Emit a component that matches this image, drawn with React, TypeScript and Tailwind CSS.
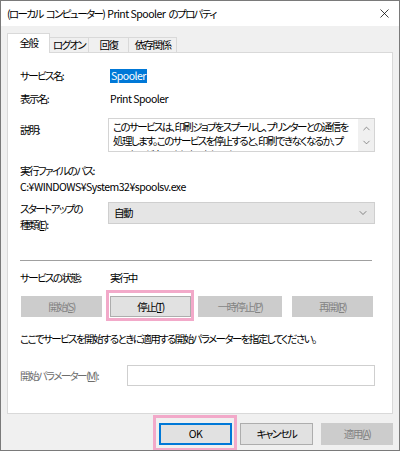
import { X, ChevronUp, ChevronDown } from 'lucide-react'

const font = "[font-family:'Noto_Sans_CJK_JP','Noto_Sans',sans-serif] [font-feature-settings:'palt']"

// latin runs get a looser tracking than the kana/kanji ones
const L = (props: { children: React.ReactNode }) => <span className="tracking-[-0.5px]">{props.children}</span>

const Btn = (props: { label: React.ReactNode; disabled?: boolean; className?: string; children?: React.ReactNode }) => {
    return (
        <div
            className={`relative h-[21px] flex items-center justify-center border ${
                props.disabled ? 'bg-[#cccccc] border-[#cccccc] text-[#838383]' : 'bg-[#e1e1e1] border-[#adadad] text-black'
            } ${props.className ?? ''}`}
        >
            {props.label}
            {props.children}
        </div>
    )
}

const Highlight = (props: { className: string }) => (
    <div className={`absolute border-[3px] border-[#f2a9c9] pointer-events-none ${props.className}`}></div>
)

const App = () => {
    return (
        <div className={`w-[400px] h-[451px] bg-[#f0f0f0] border border-[#7a7a7a] flex flex-col overflow-hidden text-black text-[10.5px] tracking-[-1.6px] leading-[16px] ${font}`}>
            {/* title bar */}
            <div className="h-[25px] bg-white flex items-center justify-between pl-[6px] pr-[7px] shrink-0">
                <span className="flex whitespace-nowrap">
                    <span>(ローカル</span>
                    <span className="ml-[3px]">コンピューター)</span>
                    <span className="ml-[3px]">
                        <L>Print Spooler</L>
                    </span>
                    <span className="ml-[3px]">のプロパティ</span>
                </span>
                <X size={15} strokeWidth={1.2} />
            </div>

            {/* tabs */}
            <div className="flex items-end h-[26px] ml-[6px] shrink-0 whitespace-nowrap">
                <div className="h-[20px] w-[43px] bg-white border border-b-0 border-[#d9d9d9] flex items-start justify-center pt-[1px] relative top-[1px] z-10">全般</div>
                <div className="h-[15px] w-[39px] border border-l-0 border-b-0 border-[#d9d9d9] flex items-center justify-center bg-[#f0f0f0]">ログオン</div>
                <div className="h-[15px] w-[40px] border border-l-0 border-b-0 border-[#d9d9d9] flex items-center justify-center bg-[#f0f0f0]">回復</div>
                <div className="h-[15px] w-[48px] border border-l-0 border-b-0 border-[#d9d9d9] flex items-center justify-center bg-[#f0f0f0]">依存関係</div>
            </div>

            {/* panel */}
            <div className="mx-[6px] h-[362px] bg-white border border-[#d9d9d9] shrink-0 pl-[12px] pr-[17px] flex flex-col whitespace-nowrap">
                <div className="flex mt-[15px] h-[16px] items-center">
                    <span className="w-[90px]">サービス名:</span>
                    <span className="bg-[#0078d7] text-white px-[1px] h-[14px] flex items-center">
                        <L>Spooler</L>
                    </span>
                </div>
                <div className="flex mt-[7px] h-[16px] items-center">
                    <span className="w-[90px]">表示名:</span>
                    <L>Print Spooler</L>
                </div>
                <div className="flex mt-[11px]">
                    <span className="w-[88px] pt-[4px]">説明:</span>
                    <div className="flex-1 h-[34px] border border-[#d4d4d4] flex overflow-hidden">
                        <div className="flex-1 pl-[4px] pt-[1px] leading-[14px] overflow-hidden">
                            このサービスは、印刷ジョブをスプールし、プリンターとの通信を
                            <br />
                            処理します。このサービスを停止すると、印刷できなくなるか、プ
                            <br />
                            リンターが表示されなくなります。
                        </div>
                        <div className="w-[16px] bg-[#f0f0f0] flex flex-col items-center justify-center gap-[3px] text-[#606060]">
                            <ChevronUp size={11} strokeWidth={1.5} />
                            <ChevronDown size={11} strokeWidth={1.5} />
                        </div>
                    </div>
                </div>
                <div className="mt-[11px] h-[16px] flex items-center">実行ファイルのパス:</div>
                <div className="h-[16px] flex items-center">
                    <L>C:¥WINDOWS¥System32¥spoolsv.exe</L>
                </div>
                <div className="flex mt-[6px]">
                    <div className="w-[88px] flex flex-col">
                        <span>スタートアップの</span>
                        <span>
                            種類(<span className="underline">E</span>):
                        </span>
                    </div>
                    <div className="flex-1 h-[22px] mt-[1px] bg-[#e5e5e5] border border-[#cfcfcf] flex items-center justify-between pl-[5px] pr-[5px]">
                        <span>自動</span>
                        <ChevronDown size={12} strokeWidth={1.2} className="text-[#404040]" />
                    </div>
                </div>
                <div className="mt-[27px] h-px bg-[#a0a0a0] mr-[3px]"></div>
                <div className="flex mt-[9px] h-[16px] items-center">
                    <span className="w-[90px]">サービスの状態:</span>
                    <span>実行中</span>
                </div>
                <div className="flex mt-[10px] ml-px">
                    <Btn label={<>開始(<span className="underline">S</span>)</>} disabled className="w-[81px]" />
                    <Btn label={<>停止(<span className="underline">T</span>)</>} className="w-[81px] ml-[8px]">
                        <Highlight className="-left-[5px] -right-[4px] -top-[7px] -bottom-[5px]" />
                    </Btn>
                    <Btn label={<>一時停止(<span className="underline">P</span>)</>} disabled className="w-[84px] ml-[7px]" />
                    <Btn label={<>再開(<span className="underline">R</span>)</>} disabled className="w-[81px] ml-[10px]" />
                </div>
                <div className="mt-[14px] h-[16px] flex items-center">
                    ここでサービスを開始するときに適用する開始パラメーターを指定してください。
                </div>
                <div className="flex mt-[18px] items-center">
                    <span className="w-[107px] text-[#6d6d6d]">
                        開始パラメーター(<span className="underline">M</span>):
                    </span>
                    <div className="flex-1 h-[21px] border border-[#cfcfcf]"></div>
                </div>
            </div>

            {/* footer buttons */}
            <div className="flex justify-end gap-[8px] pr-[6px] mt-[9px] whitespace-nowrap">
                <Btn label={<L>OK</L>} className="w-[73px] h-[22px] !border-[#0078d7] border-2">
                    <Highlight className="-left-[8px] -right-[7px] -top-[10px] -bottom-[8px]" />
                </Btn>
                <Btn label="キャンセル" className="w-[73px] h-[22px]" />
                <Btn label={<>適用(<span className="underline">A</span>)</>} disabled className="w-[72px] h-[22px]" />
            </div>
        </div>
    )
}

export default App
